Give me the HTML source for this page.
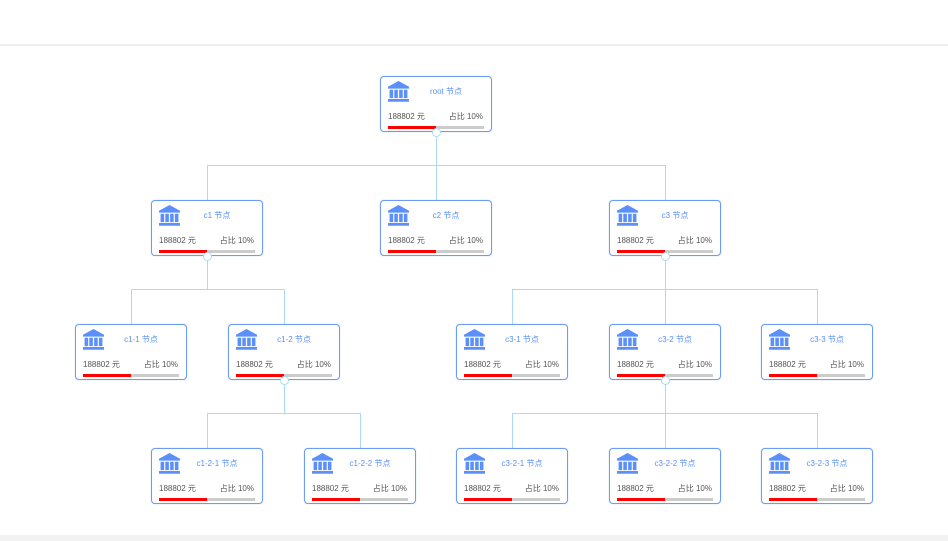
<!DOCTYPE html>
<html><head><meta charset="utf-8"><style>
body{margin:0;width:948px;height:541px;background:#fff;position:relative;overflow:hidden;font-family:"Liberation Sans","Noto Sans CJK SC",sans-serif}
.top{position:absolute;left:0;top:44px;width:948px;height:2px;background:#eeeef2}
.bot{position:absolute;left:0;top:535px;width:948px;height:6px;background:#f2f2f2}
.n{position:absolute;width:110px;height:54px;border:1.5px solid #6b9cf9;border-radius:4px;background:#fff;box-sizing:content-box;box-shadow:0 0 1px #9fbefc}
.n svg.ic{position:absolute;left:7px;top:4px}
.t{position:absolute;left:30px;width:70px;top:9px;text-align:center;font-size:8px;color:#5b8ff9}
.v{position:absolute;left:7px;top:34px;font-size:8px;color:#555}
.p{position:absolute;right:8px;top:34px;font-size:8px;color:#555}
.bar{position:absolute;left:7px;top:49px;width:96px;height:3px;background:#ccc}
.bar i{position:absolute;left:0;top:0;width:48px;height:3px;background:#f00}
.h{position:absolute;height:1px;background:#a9dbf7}
.vl{position:absolute;width:1px;background:#a9dbf7}
.c{position:absolute;width:9px;height:9px;border:1px solid #a9dbf7;border-radius:50%;background:#fff;box-sizing:border-box}
</style></head><body>
<div class="top"></div><div class="bot"></div>
<div class="vl" style="left:436px;top:132px;height:34px"></div>
<div class="h" style="left:207px;top:165px;width:458px"></div>
<div class="vl" style="left:207px;top:165px;height:35px"></div>
<div class="vl" style="left:436px;top:165px;height:35px"></div>
<div class="vl" style="left:665px;top:165px;height:35px"></div>

<div class="vl" style="left:207px;top:256px;height:34px"></div>
<div class="h" style="left:131px;top:289px;width:153px"></div>
<div class="vl" style="left:131px;top:289px;height:36px"></div>
<div class="vl" style="left:284px;top:289px;height:36px"></div>

<div class="vl" style="left:665px;top:256px;height:34px"></div>
<div class="h" style="left:512px;top:289px;width:306px"></div>
<div class="vl" style="left:512px;top:289px;height:36px"></div>
<div class="vl" style="left:665px;top:289px;height:36px"></div>
<div class="vl" style="left:817px;top:289px;height:36px"></div>

<div class="vl" style="left:284px;top:380px;height:34px"></div>
<div class="h" style="left:207px;top:413px;width:153px"></div>
<div class="vl" style="left:207px;top:413px;height:36px"></div>
<div class="vl" style="left:360px;top:413px;height:36px"></div>

<div class="vl" style="left:665px;top:380px;height:34px"></div>
<div class="h" style="left:512px;top:413px;width:306px"></div>
<div class="vl" style="left:512px;top:413px;height:36px"></div>
<div class="vl" style="left:665px;top:413px;height:36px"></div>
<div class="vl" style="left:817px;top:413px;height:36px"></div>

<svg width="0" height="0" style="position:absolute"><defs><symbol id="bank" viewBox="0 0 20 20"><path fill="#5b8ff9" d="M10 0L0 5.5V7.3H20V5.5Z M1.5 8.3h3.4v8h-3.4z M6 8.3h3.4v8h-3.4z M10.6 8.3h3.4v8h-3.4z M15.1 8.3h3.4v8h-3.4z M0 17.2h20v2.6h-20z"/></symbol></defs></svg>

<div class="n" style="left:380px;top:76px"><svg class="ic" width="21" height="21"><use href="#bank"/></svg><div class="t">root 节点</div><div class="v">188802 元</div><div class="p">占比 10%</div><div class="bar"><i></i></div></div>

<div class="n" style="left:151px;top:200px"><svg class="ic" width="21" height="21"><use href="#bank"/></svg><div class="t">c1 节点</div><div class="v">188802 元</div><div class="p">占比 10%</div><div class="bar"><i></i></div></div>
<div class="n" style="left:380px;top:200px"><svg class="ic" width="21" height="21"><use href="#bank"/></svg><div class="t">c2 节点</div><div class="v">188802 元</div><div class="p">占比 10%</div><div class="bar"><i></i></div></div>
<div class="n" style="left:609px;top:200px"><svg class="ic" width="21" height="21"><use href="#bank"/></svg><div class="t">c3 节点</div><div class="v">188802 元</div><div class="p">占比 10%</div><div class="bar"><i></i></div></div>

<div class="n" style="left:75px;top:324px"><svg class="ic" width="21" height="21"><use href="#bank"/></svg><div class="t">c1-1 节点</div><div class="v">188802 元</div><div class="p">占比 10%</div><div class="bar"><i></i></div></div>
<div class="n" style="left:228px;top:324px"><svg class="ic" width="21" height="21"><use href="#bank"/></svg><div class="t">c1-2 节点</div><div class="v">188802 元</div><div class="p">占比 10%</div><div class="bar"><i></i></div></div>
<div class="n" style="left:456px;top:324px"><svg class="ic" width="21" height="21"><use href="#bank"/></svg><div class="t">c3-1 节点</div><div class="v">188802 元</div><div class="p">占比 10%</div><div class="bar"><i></i></div></div>
<div class="n" style="left:609px;top:324px"><svg class="ic" width="21" height="21"><use href="#bank"/></svg><div class="t">c3-2 节点</div><div class="v">188802 元</div><div class="p">占比 10%</div><div class="bar"><i></i></div></div>
<div class="n" style="left:761px;top:324px"><svg class="ic" width="21" height="21"><use href="#bank"/></svg><div class="t">c3-3 节点</div><div class="v">188802 元</div><div class="p">占比 10%</div><div class="bar"><i></i></div></div>

<div class="n" style="left:151px;top:448px"><svg class="ic" width="21" height="21"><use href="#bank"/></svg><div class="t">c1-2-1 节点</div><div class="v">188802 元</div><div class="p">占比 10%</div><div class="bar"><i></i></div></div>
<div class="n" style="left:304px;top:448px"><svg class="ic" width="21" height="21"><use href="#bank"/></svg><div class="t">c1-2-2 节点</div><div class="v">188802 元</div><div class="p">占比 10%</div><div class="bar"><i></i></div></div>
<div class="n" style="left:456px;top:448px"><svg class="ic" width="21" height="21"><use href="#bank"/></svg><div class="t">c3-2-1 节点</div><div class="v">188802 元</div><div class="p">占比 10%</div><div class="bar"><i></i></div></div>
<div class="n" style="left:609px;top:448px"><svg class="ic" width="21" height="21"><use href="#bank"/></svg><div class="t">c3-2-2 节点</div><div class="v">188802 元</div><div class="p">占比 10%</div><div class="bar"><i></i></div></div>
<div class="n" style="left:761px;top:448px"><svg class="ic" width="21" height="21"><use href="#bank"/></svg><div class="t">c3-2-3 节点</div><div class="v">188802 元</div><div class="p">占比 10%</div><div class="bar"><i></i></div></div>

<div class="c" style="left:432px;top:128px"></div>
<div class="c" style="left:203px;top:252px"></div>
<div class="c" style="left:661px;top:252px"></div>
<div class="c" style="left:280px;top:376px"></div>
<div class="c" style="left:661px;top:376px"></div>
</body></html>
